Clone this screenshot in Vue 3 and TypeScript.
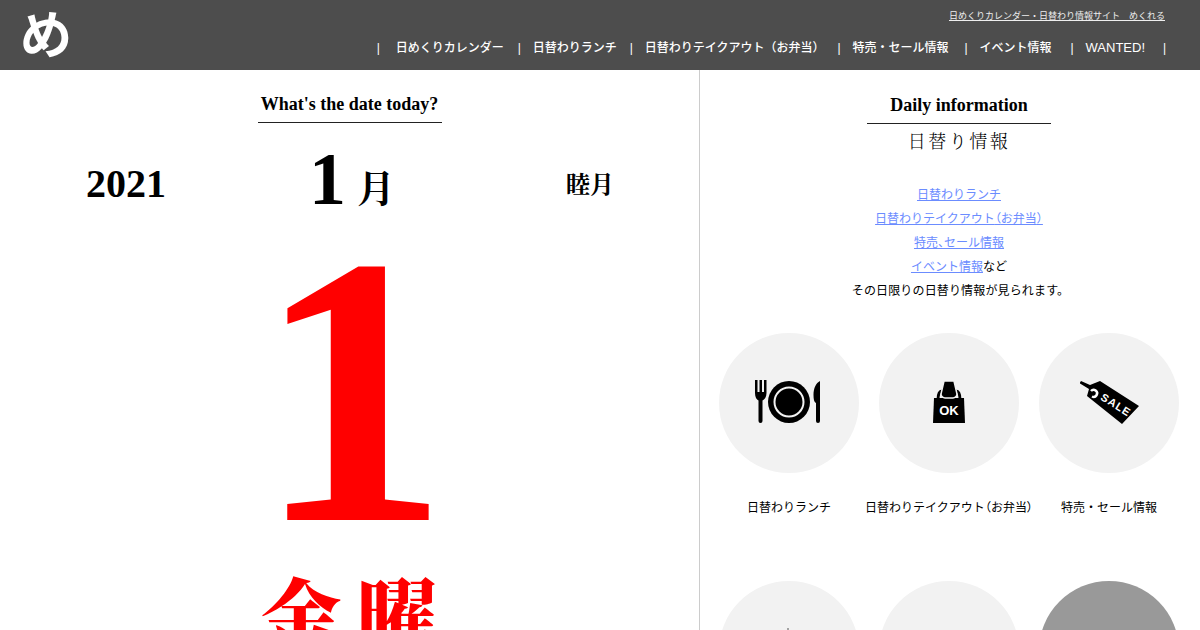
<script setup lang="ts">
const navItems = ['日めくりカレンダー', '日替わりランチ', '日替わりテイクアウト（お弁当）', '特売・セール情報', 'イベント情報', 'WANTED!']
const links = ['日替わりランチ', '日替わりテイクアウト（お弁当）', '特売、セール情報']
const tiles = [
  { id: 'lunch', label: '日替わりランチ' },
  { id: 'takeout', label: '日替わりテイクアウト（お弁当）' },
  { id: 'sale', label: '特売・セール情報' },
  { id: 'event', label: 'イベント情報' },
  { id: 'wanted', label: 'WANTED!' },
  { id: 'more', label: '' }
]

// parens and the comma are set tight in the body text
const splitText = (s: string) => s.split(/([（）、])/).filter(Boolean)
const isTight = (s: string) => /^[（）、]$/.test(s)
</script>

<template>
  <div class="page">
    <header class="header">
      <a class="logo">め</a>
      <div class="header-right">
        <a class="site-name">日めくりカレンダー・日替わり情報サイト　めくれる</a>
        <nav class="nav">
          <span class="sep">|</span>
          <template v-for="item in navItems" :key="item">
            <a class="nav-item">{{ item }}</a>
            <span class="sep">|</span>
          </template>
        </nav>
      </div>
    </header>

    <main class="main">
      <section class="left">
        <h2 class="today-title">What's the date today?</h2>
        <div class="date-row">
          <div class="year">2021</div>
          <div class="month"><span class="month-num">1</span><span class="month-kanji">月</span></div>
          <div class="month-old">睦月</div>
        </div>
        <div class="day">1</div>
        <div class="weekday">金曜</div>
      </section>

      <section class="right">
        <div class="info-head">
          <h2 class="info-title">Daily information</h2>
          <p class="info-sub">日替り情報</p>
          <div class="intro">
            <p v-for="link in links" :key="link">
              <a class="link"><span v-for="(part, i) in splitText(link)" :key="i" :class="{ tight: isTight(part) }">{{ part }}</span></a>
            </p>
            <p><a class="link">イベント情報</a>など</p>
            <p class="note">その日限りの日替り情報が見られます。</p>
          </div>
        </div>
        <div class="tiles">
          <div v-for="tile in tiles" :key="tile.id" class="tile">
            <div class="circle" :class="{ dark: tile.id === 'more' }">
              <svg v-if="tile.id === 'lunch'" viewBox="0 0 140 140" class="icon">
                <path d="M36 47h2.500v12h2V47h2.500v12h2V47H47.500v13c0 4-2 6.500-4 7.500V88a2 2 0 0 1-4 0V67.500c-2-1-3.500-3.500-3.500-7.500z" />
                <circle cx="70" cy="69" r="21" />
                <circle cx="70" cy="69" r="14.500" fill="none" stroke="#f2f2f2" stroke-width="2" />
                <path d="M101 48v40a2 2 0 0 1-4 0V70c-2-1-2.500-4-2.500-8 0-7 2.500-12 6.500-14z" />
              </svg>
              <svg v-else-if="tile.id === 'takeout'" viewBox="0 0 140 140" class="icon">
                <path d="M59 67c0-6 1-9 4-9h14c3 0 4 3 4 9" fill="none" stroke="#000" stroke-width="3" />
                <path d="M55 65h30l1 25H54z" />
                <path d="M65 48h10l3 13c0 2-2 4-4 4h-8c-2 0-4-2-4-4z" stroke="#f2f2f2" stroke-width="1.500" />
                <text x="70" y="82" class="bag-text">OK</text>
              </svg>
              <svg v-else-if="tile.id === 'sale'" viewBox="0 0 140 140" class="icon">
                <path d="M41 49.500L42 48l9 4 10-4 39 25-17 18-35-28 2-7-9-5.500z" />
                <path d="M52 58a3.500 3.500 0 1 1 1 5.500" fill="none" stroke="#fff" stroke-width="2.500" />
                <text x="0" y="0" transform="translate(75 75) rotate(32)" class="tag-text">SALE</text>
              </svg>
              <svg v-else-if="tile.id === 'event'" viewBox="0 0 140 140" class="icon">
                <rect x="68.500" y="47" width="1" height="2" fill="#555" />
              </svg>
            </div>
            <p class="tile-label"><span v-for="(part, i) in splitText(tile.label)" :key="i" :class="{ tight: isTight(part) }">{{ part }}</span></p>
          </div>
        </div>
      </section>
    </main>
  </div>
</template>

<style>
html, body {
  margin: 0;
  overflow: hidden;
}
</style>

<style scoped>
.page {
  width: 1200px;
  height: 630px;
  overflow: hidden;
  background: #fff;
  color: #000;
  font-family: "Noto Sans CJK JP", "Noto Sans", sans-serif;
}
.header {
  height: 70px;
  background: #4d4d4d;
  display: flex;
  justify-content: space-between;
  color: #fff;
}
.logo {
  font-size: 52px;
  font-weight: 700;
  line-height: 64px;
  margin-left: 20px;
}
.header-right {
  display: flex;
  flex-direction: column;
  align-items: flex-end;
  padding: 9px 35px 0 0;
}
.site-name {
  font-size: 9px;
  line-height: 14px;
  text-decoration: underline;
  color: #eee;
}
.nav {
  display: flex;
  gap: 14px;
  margin-top: 16px;
  margin-right: 1px;
  font-family: "Liberation Sans", "Noto Sans CJK JP", sans-serif;
  font-size: 12px;
  line-height: 18px;
  font-weight: 500;
}
.sep {
  width: 1px;
}
.nav-item:nth-of-type(1) {
  margin-left: 4px;
}
.nav-item:nth-of-type(2), .nav-item:nth-of-type(3) {
  margin-right: -1px;
}
.nav-item:nth-of-type(4) {
  margin-right: 2px;
}
.nav-item:nth-of-type(5) {
  margin-right: 5px;
}
.nav-item:nth-of-type(6) {
  margin-right: 4px;
  font-size: 13px;
}
.main {
  display: flex;
  height: 560px;
}
.left {
  flex: none;
  width: 699px;
  border-right: 1px solid #ccc;
  display: flex;
  flex-direction: column;
  align-items: center;
}
.today-title, .info-title {
  margin: 0;
  width: 184px;
  text-align: center;
  font-family: "Liberation Serif", serif;
  font-weight: 700;
  font-size: 18px;
  line-height: 28px;
  border-bottom: 1px solid #222;
  white-space: nowrap;
}
.today-title {
  margin-top: 20px;
  padding-bottom: 4px;
}
.date-row {
  display: grid;
  grid-template-columns: 252px 200px 1fr;
  width: 100%;
  height: 100px;
  font-family: "Liberation Serif", "Noto Serif CJK JP", "Noto Sans CJK JP", serif;
  font-weight: 700;
}
.year {
  font-size: 40px;
  line-height: 122px;
  text-align: center;
}
.month {
  text-align: center;
  line-height: 112px;
  white-space: nowrap;
}
.month-num {
  font-size: 74px;
}
.month-kanji {
  font-size: 38px;
  margin-left: 11px;
  position: relative;
  top: -2px;
}
.month-old {
  font-size: 24px;
  line-height: 124px;
  padding-left: 114px;
}
.day {
  color: #f00;
  font-family: "Liberation Serif", serif;
  font-weight: 700;
  font-size: 384px;
  line-height: 320px;
  margin-top: 8px;
  margin-left: 6px;
}
.weekday {
  color: #f00;
  font-family: "Noto Serif CJK JP", "Noto Sans CJK JP", serif;
  font-weight: 900;
  font-size: 80px;
  line-height: 100px;
  letter-spacing: 16px;
  margin-top: 10px;
  margin-left: 15px;
}
.right {
  flex: none;
  width: 500px;
  padding: 21px 0 0 9px;
  box-sizing: border-box;
}
.info-head {
  width: 500px;
  display: flex;
  flex-direction: column;
  align-items: center;
}
.info-title {
  padding-bottom: 4px;
}
.info-sub {
  margin: 3px 0 0;
  font-family: "Noto Serif CJK JP", "Noto Sans CJK JP", serif;
  font-size: 18px;
  line-height: 26px;
  letter-spacing: 2.500px;
  font-weight: 300;
}
.intro {
  margin-top: 29px;
  font-size: 12px;
  line-height: 24px;
  text-align: center;
}
.intro p {
  margin: 0;
}
.intro .note {
  letter-spacing: 0.150px;
  padding-left: 3px;
}
.link {
  color: #6b8cff;
  text-decoration: underline;
}
.tight {
  font-feature-settings: "palt";
}
.tiles {
  display: grid;
  grid-template-columns: repeat(3, 160px);
  margin-top: 31px;
}
.tile {
  height: 248px;
  display: flex;
  flex-direction: column;
  align-items: center;
}
.circle {
  width: 140px;
  height: 140px;
  border-radius: 50%;
  background: #f2f2f2;
  flex: none;
}
.circle.dark {
  background: #999;
}
.icon {
  width: 140px;
  height: 140px;
  display: block;
}
.bag-text {
  fill: #fff;
  font-family: "Liberation Sans", sans-serif;
  font-weight: 700;
  font-size: 13px;
  text-anchor: middle;
}
.tag-text {
  fill: #fff;
  font-family: "Liberation Sans", sans-serif;
  font-weight: 700;
  font-size: 11px;
  text-anchor: middle;
  letter-spacing: 1px;
}
.tile-label {
  margin: 25px 0 0;
  font-size: 12px;
  line-height: 18px;
  white-space: nowrap;
}
</style>
